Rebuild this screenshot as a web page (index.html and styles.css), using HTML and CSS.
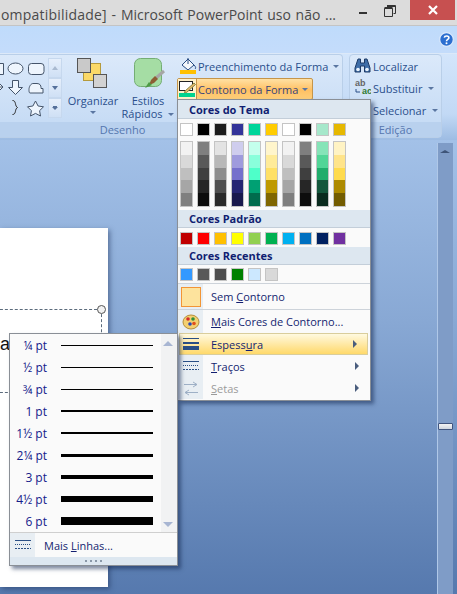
FILE: index.html
```html
<!DOCTYPE html>
<html lang="pt">
<head>
<meta charset="utf-8">
<title>Microsoft PowerPoint</title>
<link rel="stylesheet" href="styles.css">
</head>
<body>
<div class="window">
  <header class="titlebar">
    <div class="title"><span class="title-start">ompatibilidade] -</span> Microsoft PowerPoint uso não ...</div>
    <div class="winbtns">
      <span class="min"></span>
      <svg class="restore" width="12" height="12" viewBox="0 0 12 12"><path d="M3.500 2.500V.5h8v8h-2M.5 3.500h8v8h-8z" fill="none" stroke="#333" stroke-width="1"/><path d="M.5 3h8M3 1h8" stroke="#333" stroke-width="2"/></svg>
      <span class="close"><svg width="10" height="10" viewBox="0 0 10 10"><path d="M1 1l8 8M9 1l-8 8" stroke="#fff" stroke-width="2.200"/></svg></span>
    </div>
  </header>
  <div class="tabstrip">
    <svg class="help" width="15" height="15" viewBox="0 0 15 15"><circle cx="7.500" cy="7.500" r="6.800" fill="#2c6fd0" stroke="#dbe9fb" stroke-width="1.200"/><path d="M5.300 5.700C5.600 3.400 9.900 3.500 9.900 5.800c0 1.600-2.400 1.700-2.400 3.400" fill="none" stroke="#fff" stroke-width="1.600"/><circle cx="7.500" cy="11.200" r="1" fill="#fff"/></svg>
  </div>
  <div class="ribbon">
    <section class="group desenho">
      <div class="group-body">
        <div class="shapes">
          <svg width="47" height="58" viewBox="0 0 47 58">
            <g fill="#eef5fd" stroke="#44546a" stroke-width="1">
              <path d="M-4 3.500h7.500v11h-7.500z"/>
              <ellipse cx="15.500" cy="8.500" rx="7.500" ry="5.500"/>
              <rect x="28.500" y="3.500" width="15.500" height="11" rx="3"/>
              <path d="M-3 27l6 0 -3 3z M-3 27l3-3 3 3"/>
              <path d="M12.500 20.500h6v7h4l-7 7-7-7h4z"/>
              <path d="M33 23.500h4c3 0 4 2 4 4v1h2v4.500H30c-1 0-1-2-1-3.500 0-3 2-6 4-6z"/>
              <path d="M12.500 40.500c4 0 2 5.500 5 7 -3 1.500-1 7-5 7" fill="none" stroke="#222"/>
              <path d="M35.500 41l2.600 5 5.400.8-3.900 3.900.9 5.300-5-2.600-5 2.600.9-5.300-3.900-3.900 5.400-.8z"/>
            </g>
          </svg>
          <div class="gal-btns">
            <span class="gal up"></span>
            <span class="gal down"></span>
            <span class="gal more"></span>
          </div>
        </div>
        <div class="big organizar">
          <svg width="30" height="30" viewBox="0 0 30 30">
            <rect x="6.500" y="5.500" width="17" height="17" fill="#fbd968" stroke="#b59a3c"/>
            <rect x=".5" y=".5" width="13" height="14" fill="#c9c9c9" stroke="#555"/>
            <rect x="16.500" y="16.500" width="13" height="13" fill="#d2d2d2" stroke="#555"/>
          </svg>
          <span class="biglabel first">Organizar</span>
          <span class="arrow"></span>
        </div>
        <div class="big estilos">
          <svg width="32" height="32" viewBox="0 0 32 32">
            <rect x=".5" y=".5" width="27" height="28" rx="6" fill="#a5dda4" stroke="#74ad74"/>
            <path d="M30 13 22 20" stroke="#a6a6a6" stroke-width="3"/>
            <path d="M21 18l3 3-4 4-5 2 2-5z" fill="#8c5e34"/>
            <path d="M11 30l4-6 3 3z" fill="#4c9a45"/>
          </svg>
          <span class="biglabel first">Estilos</span>
          <span class="biglabel">Rápidos <i class="arrow inline"></i></span>
        </div>
        <div class="shapecmds">
          <div class="cmd">
            <svg width="17" height="18" viewBox="0 0 17 18"><path d="M2 8l6-6 6 6-6 5z" fill="#f4f7fb" stroke="#264a82"/><path d="M8 1v6" stroke="#264a82"/><path d="M14 8c2 2 2 3 1 4" stroke="#264a82" fill="none"/><rect x="0" y="13" width="16" height="4" fill="#ffc000"/></svg>
            <span>Preenchimento da Forma</span><i class="arrow inline"></i>
          </div>
          <div class="cmd active">
            <span class="cmdicon"><svg width="17" height="16" viewBox="0 0 17 16"><rect x=".5" y=".5" width="13" height="9" fill="#fff" stroke="#222"/><path d="M6 10l9-8 1.500 1.500-9 8-2 .5z" fill="#e8b96e" stroke="#884"/><rect x="0" y="12" width="16" height="4" fill="#00d38f"/></svg></span>
            <span class="cmdtext">Contorno da Forma</span><i class="arrow inline"></i>
          </div>
        </div>
      </div>
      <div class="group-label">Desenho</div>
    </section>
    <section class="group edicao">
      <div class="group-body list">
        <div class="cmd">
          <svg width="17" height="16" viewBox="0 0 17 16"><path d="M4 1h2.500v4h4V1H13l3 9v4h-5.500V8h-4v6H1v-4z" fill="#3f6ea8" stroke="#1d3a66"/><circle cx="4" cy="11.500" r="1.800" fill="#eaf2fb"/><circle cx="13" cy="11.500" r="1.800" fill="#eaf2fb"/></svg>
          <span>Localizar</span>
        </div>
        <div class="cmd">
          <svg width="17" height="18" viewBox="0 0 17 18"><text x="1" y="7" class="ab">ab</text><text x="8" y="15" class="ac">ac</text><path d="M2 10v3h4" fill="none" stroke="#2a4f86"/></svg>
          <span>Substituir</span><i class="arrow inline"></i>
        </div>
        <div class="cmd indent">
          <span>Selecionar</span><i class="arrow inline"></i>
        </div>
      </div>
      <div class="group-label">Edição</div>
    </section>
  </div>
  <main class="workspace">
    <div class="slide">
      <span class="slide-text">a</span>
      <div class="placeholder"><span class="handle"></span></div>
    </div>
    <div class="scrollbar"><span class="sup"></span><span class="thumb"></span></div>
  </main>

  <div class="menu colors">
    <div class="menu-head first-head">Cores do Tema</div>
    <div class="swatches theme-row" id="theme"></div>
    <div class="ramps" id="ramps"></div>
    <div class="menu-head">Cores Padrão</div>
    <div class="swatches std-row" id="std"></div>
    <div class="menu-head">Cores Recentes</div>
    <div class="swatches recent-row" id="recent"></div>
    <div class="item sep tall">
      <span class="gutter"><span class="nocolor"></span></span>
      <span class="lbl">Sem <u>C</u>ontorno</span>
    </div>
    <div class="item sep more-colors">
      <span class="gutter"><svg width="18" height="18" viewBox="0 0 18 18"><ellipse cx="9" cy="9" rx="8" ry="7" fill="#f3d071" stroke="#b58f3c"/><circle cx="6" cy="6" r="1.800" fill="#d42c2c"/><circle cx="11" cy="6" r="1.800" fill="#2f8f3a"/><circle cx="8" cy="11" r="1.800" fill="#2a49b5"/><circle cx="12" cy="10.500" r="1.800" fill="#e04f1d"/></svg></span>
      <span class="lbl"><u>M</u>ais Cores de Contorno...</span>
    </div>
    <div class="item hot">
      <span class="gutter"><svg width="16" height="12" viewBox="0 0 16 12"><rect y="0" width="16" height="1" fill="#2a4f86"/><rect y="4" width="16" height="2" fill="#2a4f86"/><rect y="8" width="16" height="4" fill="#2a4f86"/></svg></span>
      <span class="lbl">Espess<u>u</u>ra</span><i class="caret"></i>
    </div>
    <div class="item">
      <span class="gutter"><svg width="16" height="12" viewBox="0 0 16 12" fill="none" stroke="#2a4f86"><path d="M0 1.500h16"/><path d="M0 5.500h16" stroke-dasharray="1 1"/><path d="M0 9.500h16" stroke-dasharray="2 1"/></svg></span>
      <span class="lbl"><u>T</u>raços</span><i class="caret"></i>
    </div>
    <div class="item off">
      <span class="gutter"><svg width="16" height="16" viewBox="0 0 16 16" fill="none" stroke="#9eb0c6"><path d="M1 4.500h13M10 2l4 2.500L10 7M15 12.500H2M6 10l-4 2.500L6 15"/></svg></span>
      <span class="lbl"><u>S</u>etas</span><i class="caret"></i>
    </div>
  </div>

  <div class="menu weights">
    <div class="weight-body">
      <div class="weight-list" id="weights"></div>
      <div class="weight-scroll"><span class="tri up"></span><span class="tri down"></span></div>
    </div>
    <div class="item foot">
      <span class="gutter"><svg width="16" height="12" viewBox="0 0 16 12" fill="none" stroke="#2a4f86"><path d="M0 1.500h16"/><path d="M0 5.500h16" stroke-dasharray="1 1"/><path d="M0 9.500h16" stroke-dasharray="2 1"/></svg></span>
      <span class="lbl">Mais <u>L</u>inhas...</span>
    </div>
    <div class="grip"><span></span></div>
  </div>
</div>
<script src="app.js"></script>
</body>
</html>
```
FILE: app.js
```js
function swatches(id, colours) {
  var box = document.getElementById(id);
  colours.forEach(function (c) {
    var s = document.createElement('span');
    s.className = 'sw';
    s.style.background = c;
    box.appendChild(s);
  });
}
swatches('theme', ['#ffffff','#000000','#1c1c1c','#333399','#00d59a','#ffcc00','#ffffff','#000000','#a6e8cb','#e6b800']);
swatches('std', ['#c00000','#ff0000','#ffc000','#ffff00','#92d050','#00b050','#00b0f0','#0070c0','#002060','#7030a0']);
swatches('recent', ['#3399ff','#595959','#4d4d4d','#008000','#cce8ff','#d9d9d9']);
var ramps = [
  ['#f2f2f2','#d9d9d9','#bfbfbf','#a6a6a6','#7f7f7f'],
  ['#7f7f7f','#595959','#3f3f3f','#262626','#0d0d0d'],
  ['#e3e3e3','#b8b8b8','#8d8d8d','#4f4f4f','#2a2a2a'],
  ['#cfcdee','#9f9bdd','#7570cc','#262673','#19194d'],
  ['#c4ffed','#89ffdb','#4effc9','#00a073','#006b4d'],
  ['#fff5cc','#ffeb99','#ffe066','#bf9900','#806600'],
  ['#f2f2f2','#d9d9d9','#bfbfbf','#a6a6a6','#7f7f7f'],
  ['#7f7f7f','#595959','#3f3f3f','#262626','#0d0d0d'],
  ['#86e4b8','#52d597','#21ad6c','#14573c','#0a2b1e'],
  ['#fff3c4','#ffe48a','#ffdb4d','#ad8a00','#735c00']
];
var rampBox = document.getElementById('ramps');
ramps.forEach(function (r) {
  var col = document.createElement('span');
  col.className = 'ramp';
  r.forEach(function (c) {
    var cell = document.createElement('span');
    cell.style.background = c;
    col.appendChild(cell);
  });
  rampBox.appendChild(col);
});
var weights = [['¼ pt',1],['½ pt',1],['¾ pt',1],['1 pt',2],['1½ pt',2],['2¼ pt',3],['3 pt',4],['4½ pt',6],['6 pt',8]];
var list = document.getElementById('weights');
weights.forEach(function (w) {
  var row = document.createElement('div');
  row.className = 'weight';
  var l = document.createElement('span');
  l.className = 'wlabel';
  l.textContent = w[0];
  var b = document.createElement('span');
  b.className = 'wline';
  b.style.height = w[1] + 'px';
  row.appendChild(l);
  row.appendChild(b);
  list.appendChild(row);
});
```
FILE: styles.css
```css
* { box-sizing: border-box; }
html, body { margin: 0; padding: 0; }
body { width: 457px; height: 594px; overflow: hidden; font-family: "Open Sans", "Noto Sans", sans-serif; }
.window { position: relative; width: 457px; height: 594px; overflow: hidden; display: flex; flex-direction: column; background: #8aa9d6; }

.titlebar { flex: 0 0 26px; display: flex; background: #dcdcdc; border-bottom: 1px solid #c4c4c4; color: #4a4a4a; overflow: hidden; }
.title { flex: 1; font-family: "Open Sans", sans-serif; font-size: 14px; word-spacing: 1px; line-height: 29px; white-space: nowrap; margin-left: 1px; }
.title-start { letter-spacing: .2px; }
.winbtns { display: flex; align-items: flex-start; }
.min { width: 8px; height: 2px; background: #333; margin: 12px 17px 0 0; }
.restore { margin: 5px 14px 0 0; }
.close { width: 45px; height: 20px; background: #c75050; display: flex; align-items: center; justify-content: center; margin-right: 2px; }

.tabstrip { flex: 0 0 27px; background: linear-gradient(#bfdbfb, #c4dcfb); display: flex; justify-content: flex-end; align-items: flex-start; padding: 6px 3px 0 0; }
.help { display: block; }

.ribbon { flex: 0 0 87px; display: flex; gap: 6px; padding: 0 15px 2px 0; background: linear-gradient(#d3e5fb, #c2d9f5 70%, #9dbce3); border-top: 1px solid #dce9f9; }
.group { display: flex; flex-direction: column; min-width: 0; border: 1px solid #b9cfe9; border-left: 0; border-radius: 0 4px 4px 0; background: linear-gradient(#dbe9fa, #c7dcf5 80%); }
.edicao { border-left: 1px solid #b9cfe9; border-radius: 4px; flex: 1; }
.group-body { flex: 1; display: flex; min-width: 0; }
.group-label { flex: 0 0 15px; background: #b9d1ee; text-align: center; font-size: 11px; line-height: 15px; color: #5576ae; }
.desenho { flex: 0 0 440px; margin-left: -97px; }

.shapes { flex: 0 0 159px; display: flex; padding: 3px 0 0 97px; }
.shapes svg { flex: 0 0 47px; display: block; margin-top: 2px; overflow: hidden; }
.gal-btns { width: 14px; display: flex; flex-direction: column; margin-left: 1px; height: 60px; }
.gal { flex: 1; border: 1px solid #c6d8ee; background: linear-gradient(#e6effb, #cfe0f5); display: flex; align-items: center; justify-content: center; }
.gal::after { content: ""; border: 3px solid transparent; border-top: 4px solid #56719b; border-bottom: 0; }
.gal.up::after { border-top: 0; border-bottom: 4px solid #a9bad0; }
.gal.more::after { border-top: 3px solid #56719b; box-shadow: 0 -2px 0 -1px #56719b; }

.big { display: flex; flex-direction: column; align-items: center; min-width: 0; font-size: 11px; line-height: 13px; color: #2a4f8c; padding-top: 3px; }
.organizar { flex: 0 0 62px; }
.organizar svg { margin-right: 2px; margin-bottom: 4px; }
.estilos { flex: 0 0 48px; }
.estilos svg { margin-left: 4px; margin-bottom: 2px; }
.biglabel { white-space: nowrap; line-height: 13px; }
.biglabel.first { margin-top: 2px; }
.arrow { display: block; width: 0; height: 0; border: 3px solid transparent; border-top: 3px solid #5a76a1; border-bottom: 0; margin-top: 4px; }
.arrow.inline { display: inline-block; margin: 0 0 2px 3px; vertical-align: middle; }

.shapecmds { flex: 1; min-width: 0; padding: 0 0 0 8px; }
.cmd { display: flex; align-items: center; gap: 1px; height: 22px; font-size: 11px; color: #2a4f8c; white-space: nowrap; }
.cmd .arrow.inline { margin: 0 0 0 4px; }
.cmd.active { width: 136px; height: 22px; margin: 1px 0 0 -3px; background: linear-gradient(#ffe1a4, #ffc063 55%, #ffcf7a); border: 1px solid #c5954a; border-radius: 2px; color: #5a3c10; gap: 0; }
.cmd.active .cmdicon { flex: 0 0 19px; display: flex; justify-content: center; align-self: stretch; align-items: center; background: #fff1c9; border-right: 1px solid #c5954a; }
.cmd.active .cmdtext { margin-left: 1px; color: #38457a; }
.list { flex-direction: column; padding: 0 0 0 4px; }
.list .cmd { gap: 2px; }
.indent { padding-left: 19px; }
.ab { font: 700 9px "Liberation Sans", sans-serif; fill: #666; }
.ac { font: 700 9px "Liberation Sans", sans-serif; fill: #2f7a32; }

.workspace { flex: 1; position: relative; background: linear-gradient(#a3c1e8, #88a8d4 40%, #5679ae); }
.slide { position: absolute; left: 0; top: 88px; width: 108px; height: 359px; background: #fff; box-shadow: 2px 2px 5px rgba(30, 50, 90, .5); }
.slide-text { position: absolute; left: 0; top: 105px; font: 18px/22px "Liberation Sans", sans-serif; color: #111; }
.placeholder { position: absolute; left: -10px; top: 81px; width: 112px; height: 84px; border: 1px dashed #5b6b7c; }
.handle { position: absolute; right: -5px; top: -5px; width: 9px; height: 9px; border-radius: 50%; background: #f2f2f2; border: 1px solid #555; }
.scrollbar { position: absolute; left: 437px; top: 3px; width: 16px; bottom: 0; background: #7f9cc7; border-left: 1px solid #b0c8e8; }
.sup { position: absolute; left: 2px; top: 7px; border: 5px solid transparent; border-top: 0; border-bottom: 3px solid #3e5478; }
.thumb { position: absolute; left: 0; top: 280px; width: 15px; height: 7px; border: 1px solid #41557e; background: linear-gradient(#f4f4f4, #cfd6e0); border-radius: 1px; }

.menu { position: absolute; background: #fafafa; border: 1px solid #8a8f96; box-shadow: 3px 3px 4px rgba(20, 40, 80, .55); font-size: 11px; color: #141f70; }
.colors { left: 177px; top: 99px; width: 194px; height: 302px; }
.menu-head { height: 18px; background: #dde7f0; border-bottom: 1px solid #c3ced9; padding-left: 11px; font-weight: 700; line-height: 17px; color: #111f72; }
.first-head { height: 19px; line-height: 20px; }
.swatches { display: flex; gap: 4px; padding: 4px 0 0 2px; }
.theme-row { height: 22px; }
.std-row { height: 19px; }
.recent-row { height: 18px; padding-top: 3px; }
.sw { width: 13px; height: 13px; border: 1px solid #c4c4c4; }
.ramps { display: flex; gap: 4px; height: 69px; padding: 0 0 0 2px; }
.ramp { width: 13px; height: 66px; border: 1px solid #c4c4c4; display: flex; flex-direction: column; }
.ramp span { flex: 1; }
.item { position: relative; display: flex; align-items: center; height: 22px; }
.sep { border-top: 1px solid #cdd3da; }
.tall { height: 26px; }
.more-colors { height: 24px; }
.gutter { flex: 0 0 25px; align-self: stretch; display: flex; align-items: center; justify-content: center; background: #e8eef3; margin-right: 8px; }
.nocolor { width: 20px; height: 20px; background: #fde39d; border: 1px solid #f29536; }
.lbl { white-space: nowrap; }
u { text-decoration-thickness: 1px; }
.hot { background: linear-gradient(#fffbe6, #ffe79f 55%, #ffd864); outline: 1px solid #d9cd9c; outline-offset: -1px; margin: 0 2px 0 1px; }
.hot .gutter { background: transparent; flex-basis: 24px; }
.caret { position: absolute; right: 11px; top: 7px; border: 4px solid transparent; border-left: 4px solid #4a5d7d; border-right: 0; }
.off { color: #9a9a9a; }

.weights { left: 9px; top: 333px; width: 169px; height: 233px; }
.weight-body { display: flex; height: 199px; border-bottom: 1px solid #cfcfcf; }
.weight-list { flex: 0 0 150px; }
.weight { display: flex; align-items: center; height: 22px; }
.wlabel { flex: 0 0 37px; text-align: right; margin-right: 14px; color: #14208a; font-size: 12px; }
.wline { flex: 0 0 92px; background: #000; }
.weight-scroll { flex: 1; margin-left: 1px; background: #f1f2f3; position: relative; }
.tri { position: absolute; left: 2px; border: 5px solid transparent; }
.tri.up { top: 7px; border-top: 0; border-bottom: 5px solid #a7b5d2; }
.tri.down { bottom: 5px; border-bottom: 0; border-top: 5px solid #a7b5d2; }
.foot { height: 24px; }
.foot .gutter { flex-basis: 25px; margin-right: 9px; }
.grip { height: 8px; background: #dde7f0; display: flex; justify-content: center; padding-top: 3px; }
.grip span { width: 17px; height: 2px; background: repeating-linear-gradient(90deg, #8a98a8 0 2px, transparent 2px 5px); }
```
